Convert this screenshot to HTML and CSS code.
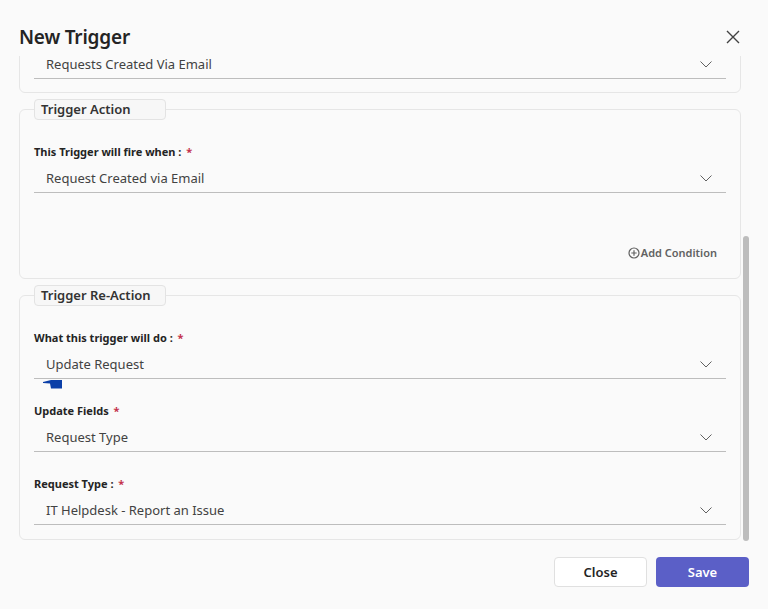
FILE: index.html
```html
<!DOCTYPE html>
<html lang="en">
<head>
<meta charset="utf-8">
<title>New Trigger</title>
<link rel="stylesheet" href="styles.css">
</head>
<body>
<div class="dialog">
  <header class="header">
    <h1 class="title">New Trigger</h1>
    <button class="close-x" aria-label="Close">
      <svg width="14" height="14" viewBox="0 0 14 14"><path d="M1 1 L13 13 M13 1 L1 13" stroke="#424242" stroke-width="1.4" fill="none"/></svg>
    </button>
  </header>

  <div class="viewport">
    <div class="scroll-content">
      <div class="inner">
        <div class="card card-first">
          <div class="select"><span class="value">Requests Created Via Email</span><svg class="chev" width="12" height="7" viewBox="0 0 12 7"><path d="M0.5 0.5 L6 6 L11.5 0.5" stroke="#616161" stroke-width="1" fill="none"/></svg></div>
        </div>

        <fieldset class="card card-action">
          <legend class="legend">Trigger Action</legend>
          <div class="field">
            <div class="label">This Trigger will fire when : <span class="req">*</span></div>
            <div class="select"><span class="value">Request Created via Email</span><svg class="chev" width="12" height="7" viewBox="0 0 12 7"><path d="M0.5 0.5 L6 6 L11.5 0.5" stroke="#616161" stroke-width="1" fill="none"/></svg></div>
          </div>
          <div class="add-row">
            <button class="add-cond"><svg width="12" height="12" viewBox="0 0 12 12"><circle cx="6" cy="6" r="5" stroke="#616161" stroke-width="1.2" fill="none"/><path d="M6 3.3 V8.7 M3.3 6 H8.7" stroke="#616161" stroke-width="1.2"/></svg>Add Condition</button>
          </div>
        </fieldset>

        <fieldset class="card">
          <legend class="legend">Trigger Re-Action</legend>
          <div class="field">
            <div class="label">What this trigger will do : <span class="req">*</span></div>
            <div class="select"><span class="value">Update Request</span><svg class="chev" width="12" height="7" viewBox="0 0 12 7"><path d="M0.5 0.5 L6 6 L11.5 0.5" stroke="#616161" stroke-width="1" fill="none"/></svg></div>
            <svg class="blot" width="20" height="9" viewBox="0 0 20 9"><polygon points="0,2 8,0 19,0 19,8.5 8,8.5 7,3.5 0,3" fill="#0b3fa8"/></svg>
          </div>
          <div class="field">
            <div class="label">Update Fields <span class="req">*</span></div>
            <div class="select"><span class="value">Request Type</span><svg class="chev" width="12" height="7" viewBox="0 0 12 7"><path d="M0.5 0.5 L6 6 L11.5 0.5" stroke="#616161" stroke-width="1" fill="none"/></svg></div>
          </div>
          <div class="field">
            <div class="label">Request Type : <span class="req">*</span></div>
            <div class="select"><span class="value">IT Helpdesk - Report an Issue</span><svg class="chev" width="12" height="7" viewBox="0 0 12 7"><path d="M0.5 0.5 L6 6 L11.5 0.5" stroke="#616161" stroke-width="1" fill="none"/></svg></div>
          </div>
        </fieldset>
      </div>
    </div>
    <div class="track"><div class="thumb"></div></div>
  </div>

  <footer class="footer">
    <button class="btn btn-close">Close</button>
    <button class="btn btn-save">Save</button>
  </footer>
</div>
</body>
</html>
```

FILE: styles.css
```css
* { box-sizing: border-box; }
html, body { margin: 0; padding: 0; }
body {
  background: #fafafa;
  font-family: "Noto Sans", "Open Sans", sans-serif;
  color: #242424;
  width: 768px;
  height: 609px;
  overflow: hidden;
}
.dialog {
  padding: 23px 19px 0 19px;
}
.header {
  display: flex;
  align-items: center;
  justify-content: space-between;
  height: 28px;
  margin-bottom: 5px;
}
.title {
  margin: 0;
  font-size: 19px;
  font-weight: 600;
  line-height: 28px;
  color: #242424;
  letter-spacing: -0.2px;
}
.close-x {
  border: 0;
  background: none;
  padding: 0;
  margin-right: 9px;
  width: 14px;
  height: 14px;
  display: flex;
}
.viewport {
  display: flex;
  height: 487px;
}
.scroll-content {
  flex: 1;
  overflow: hidden;
}
.inner {
  margin-top: -19px;
}
.track {
  width: 8px;
  padding-top: 180px;
}
.thumb {
  margin-left: 2px;
  width: 6px;
  height: 305px;
  border-radius: 3px;
  background: #bdbdbd;
}
.card {
  border: 1px solid #e6e6e6;
  border-radius: 6px;
  margin: 6px 0 0 0;
  padding: 24px 14px 14px 14px;
  min-inline-size: 0;
  background: #fafafa;
}
.card-first {
  margin-top: 0;
  padding: 10px 14px 13px 14px;
}
.card-action {
  padding-bottom: 15px;
}
.legend {
  width: 132px;
  height: 21px;
  padding: 0 6px;
  border: 1px solid #e3e3e3;
  border-radius: 4px;
  background: #f7f7f7;
  font-size: 13px;
  font-weight: 600;
  line-height: 19px;
  color: #333;
}
.field {
  position: relative;
}
.field + .field {
  margin-top: 24px;
}
.label {
  font-size: 11px;
  font-weight: 700;
  line-height: 16px;
  height: 16px;
  color: #242424;
  margin-bottom: 2px;
}
.req {
  color: #c4314b;
  margin-left: 2px;
}
.select {
  display: flex;
  align-items: center;
  justify-content: space-between;
  height: 31px;
  padding: 2px 14px 0 12px;
  border-bottom: 1px solid #bdbdbd;
}
.value {
  font-size: 13px;
  line-height: 16px;
  color: #424242;
}
.chev { display: block; }
.blot {
  position: absolute;
  left: 9px;
  top: 50px;
}
.add-row {
  display: flex;
  justify-content: flex-end;
  margin-top: 50px;
  height: 20px;
  padding-right: 9px;
}
.add-cond {
  display: flex;
  align-items: center;
  gap: 1px;
  border: 0;
  background: none;
  padding: 0;
  font-family: inherit;
  font-size: 11px;
  font-weight: 600;
  color: #616161;
  line-height: 20px;
}
.footer {
  display: flex;
  justify-content: flex-end;
  gap: 9px;
  margin-top: 14px;
}
.btn {
  width: 93px;
  height: 30px;
  border-radius: 4px;
  font-family: inherit;
  font-size: 13px;
  font-weight: 600;
  padding: 0;
}
.btn-close {
  background: #fff;
  border: 1px solid #e0e0e0;
  color: #242424;
}
.btn-save {
  background: #5b5fc7;
  border: 0;
  color: #fff;
}
```
